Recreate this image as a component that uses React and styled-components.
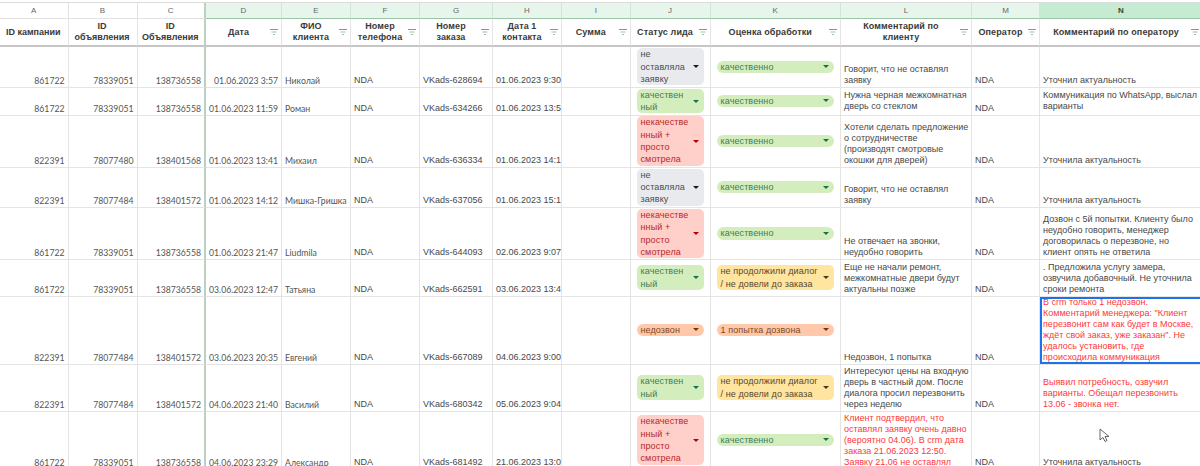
import React from 'react';
import styled, { createGlobalStyle } from 'styled-components';

const COLUMNS = '68.5px 69px 68.5px 76px 69px 69px 73px 69px 68.5px 80px 130.5px 131px 68px 163px';
const ROWS = '40.5px 28px 52px 40.5px 52px 36.5px 68px 47px 58px';

const letters = [
  { name: 'A' }, { name: 'B' }, { name: 'C' },
  { name: 'D', tone: 'active' }, { name: 'E', tone: 'active' }, { name: 'F', tone: 'active' },
  { name: 'G', tone: 'active' }, { name: 'H', tone: 'active' }, { name: 'I', tone: 'active' },
  { name: 'J', tone: 'active' }, { name: 'K', tone: 'active' }, { name: 'L', tone: 'active' },
  { name: 'M', tone: 'active' }, { name: 'N', tone: 'selected' },
];

const headers = [
  { title: 'ID кампании' },
  { title: 'ID\nобъявления' },
  { title: 'ID\nОбъявления' },
  { title: 'Дата', filter: true },
  { title: 'ФИО\nклиента', filter: true },
  { title: 'Номер\nтелефона', filter: true },
  { title: 'Номер\nзаказа', filter: true },
  { title: 'Дата 1\nконтакта', filter: true },
  { title: 'Сумма', filter: true },
  { title: 'Статус лида', filter: true },
  { title: 'Оценка обработки', filter: true },
  { title: 'Комментарий по\nклиенту', filter: true },
  { title: 'Оператор', filter: true },
  { title: 'Комментарий по оператору', filter: true },
];

const NOT_LEFT = { label: 'не\nоставляла\nзаявку', tone: 'gray' };
const GOOD_LEAD = { label: 'качествен\nный', tone: 'green' };
const BAD_LEAD = { label: 'некачестве\nнный +\nпросто\nсмотрела', tone: 'red' };
const GOOD = { label: 'качественно', tone: 'green' };
const STOPPED = { label: 'не продолжили диалог\n/ не довели до заказа', tone: 'yellow' };

const rows = [
  {
    ids: ['861722', '78339051', '138736558'], date: '01.06.2023 3:57', name: 'Николай',
    order: 'VKads-628694', contact: '01.06.2023 9:30', status: NOT_LEFT, mark: GOOD,
    client: 'Говорит, что не оставлял\nзаявку', operator: 'Уточнил актуальность',
  },
  {
    ids: ['861722', '78339051', '138736558'], date: '01.06.2023 11:59', name: 'Роман',
    order: 'VKads-634266', contact: '01.06.2023 13:59', status: GOOD_LEAD, mark: GOOD,
    client: 'Нужна черная межкомнатная\nдверь со стеклом',
    operator: 'Коммуникация по WhatsApp, выслал\nварианты', operatorTop: true, clientTop: true,
  },
  {
    ids: ['822391', '78077480', '138401568'], date: '01.06.2023 13:41', name: 'Михаил',
    order: 'VKads-636334', contact: '01.06.2023 14:15', status: BAD_LEAD, mark: GOOD,
    client: 'Хотели сделать предложение\nо сотрудничестве\n(производят смотровые\nокошки для дверей)',
    operator: 'Уточнила актуальность',
  },
  {
    ids: ['822391', '78077484', '138401572'], date: '01.06.2023 14:12', name: 'Мишка-Гришка',
    order: 'VKads-637056', contact: '01.06.2023 15:12', status: NOT_LEFT, mark: GOOD,
    client: 'Говорит, что не оставлял\nзаявку', operator: 'Уточнила актуальность',
  },
  {
    ids: ['861722', '78339051', '138736558'], date: '01.06.2023 21:47', name: 'Liudmila',
    order: 'VKads-644093', contact: '02.06.2023 9:07', status: BAD_LEAD, mark: GOOD,
    client: 'Не отвечает на звонки,\nнеудобно говорить',
    operator: 'Дозвон с 5й попытки. Клиенту было\nнеудобно говорить, менеджер\nдоговорилась о перезвоне, но\nклиент опять не ответила',
  },
  {
    ids: ['861722', '78339051', '138736558'], date: '03.06.2023 12:47', name: 'Татьяна',
    order: 'VKads-662591', contact: '03.06.2023 13:47', status: GOOD_LEAD, mark: STOPPED,
    client: 'Еще не начали ремонт,\nмежкомнатные двери будут\nактуальны позже',
    operator: '. Предложила услугу замера,\nозвучила добавочный. Не уточнила\nсроки ремонта',
  },
  {
    ids: ['822391', '78077484', '138401572'], date: '03.06.2023 20:35', name: 'Евгений',
    order: 'VKads-667089', contact: '04.06.2023 9:00',
    status: { label: 'недозвон', tone: 'orange' }, mark: { label: '1 попытка дозвона', tone: 'orange' },
    client: 'Недозвон, 1 попытка',
    operator: 'В crm только 1 недозвон.\nКомментарий менеджера: "Клиент\nперезвонит сам как будет в Москве,\nждёт свой заказ, уже заказан". Не\nудалось установить, где\nпроисходила коммуникация',
    operatorRed: true, picked: true,
  },
  {
    ids: ['822391', '78077484', '138401572'], date: '04.06.2023 21:40', name: 'Василий',
    order: 'VKads-680342', contact: '05.06.2023 9:04', status: GOOD_LEAD, mark: STOPPED,
    client: 'Интересуют цены на входную\nдверь в частный дом. После\nдиалога просил перезвонить\nчерез неделю',
    operator: 'Выявил потребность, озвучил\nварианты. Обещал перезвонить\n13.06 - звонка нет.', operatorRed: true,
  },
  {
    ids: ['861722', '78339051', '138736558'], date: '04.06.2023 23:29', name: 'Александр',
    order: 'VKads-681492', contact: '21.06.2023 13:05', status: BAD_LEAD, mark: GOOD,
    client: 'Клиент подтвердил, что\nоставлял заявку очень давно\n(вероятно 04.06). В crm дата\nзаказа 21.06.2023 12:50.\nЗаявку 21.06 не оставлял',
    clientRed: true, operator: 'Уточнила актуальность',
  },
];

const tones = {
  gray: { bg: '#e8eaed', fg: '#4a4d52', arrow: '#1b1b1b' },
  green: { bg: '#d4edbc', fg: '#3b8060', arrow: '#11734b' },
  red: { bg: '#ffcfc9', fg: '#b8282a', arrow: '#b10202' },
  orange: { bg: '#ffc8aa', fg: '#7d4a1a', arrow: '#753800' },
  yellow: { bg: '#ffe5a0', fg: '#574830', arrow: '#473821' },
};

const headTones = {
  plain: '#ffffff',
  active: '#e6f6ec',
  selected: '#c5ecd3',
};

const GlobalStyle = createGlobalStyle`
  html, body {
    margin: 0;
    height: 466px;
    overflow: hidden;
    background: #fff;
  }
`;

const Page = styled.div`
  position: relative;
  width: 1200px;
  height: 466px;
  padding-top: 2px;
  box-sizing: border-box;
  overflow: hidden;
  font-family: "Liberation Sans", Arial, sans-serif;
  font-size: 9px;
  color: #484848;
`;

const Sheet = styled.div`
  display: grid;
  grid-template-columns: ${COLUMNS};
  grid-template-rows: 16px 28px ${ROWS};
  width: max-content;
  border-top: 1px solid #dcdcdc;
`;

const Letter = styled.div`
  display: flex;
  align-items: center;
  justify-content: center;
  font-size: 8px;
  color: ${p => (p.$tone === 'selected' ? '#2d4a3a' : '#666')};
  font-weight: ${p => (p.$tone === 'selected' ? 700 : 400)};
  background: ${p => headTones[p.$tone || 'plain']};
  border-right: 1px solid ${p => (p.$tone ? '#cfe6d6' : '#e2e2e2')};
  border-bottom: 1px solid ${p => (p.$tone ? '#9cc5a8' : '#e2e2e2')};
  ${p => p.$frozen && 'border-right: 2px solid #bcd0c2;'}
  box-sizing: border-box;
`;

const HeadCell = styled.div`
  display: flex;
  align-items: center;
  padding: 0 3px 0 2px;
  box-sizing: border-box;
  border-right: 1px solid #e4e4e4;
  border-bottom: 2px solid #c6c6c6;
  ${p => p.$frozen && 'border-right: 2px solid #bcd0c2;'}
`;

const HeadTitle = styled.div`
  flex: 1;
  min-width: 0;
  text-align: center;
  font-weight: 700;
  line-height: 11px;
  letter-spacing: ${p => (p.$filtered ? '0.1px' : '0')};
  white-space: pre;
  color: #3a3a3a;
`;

const FilterMark = styled.svg`
  flex: none;
  width: 8px;
  height: 6px;
  margin-left: 1px;
`;

const Cell = styled.div`
  display: flex;
  flex-direction: column;
  justify-content: ${p => (p.$top ? 'flex-start' : 'flex-end')};
  min-width: 0;
  padding: ${p => (p.$top ? '2px 3px 0' : '0 3px 1px')};
  box-sizing: border-box;
  overflow: hidden;
  border-right: 1px solid #e4e4e4;
  border-bottom: 1px solid #e4e4e4;
  ${p => p.$frozen && 'border-right: 2px solid #bcd0c2;'}
  ${p => p.$picked && 'box-shadow: inset 0 0 0 2px #1a73e8;'}
`;

const CellText = styled.div`
  line-height: 11px;
  white-space: pre;
  text-align: ${p => p.$align || 'left'};
  color: ${p => (p.$red ? '#ff3838' : 'inherit')};
  ${p => p.$calibri && `
    font-family: Lato, "Liberation Sans", sans-serif;
    font-size: 8.7px;
    color: #555;
  `}
`;

const ChipCell = styled.div`
  display: flex;
  align-items: center;
  padding: 0 6px;
  box-sizing: border-box;
  border-right: 1px solid #e4e4e4;
  border-bottom: 1px solid #e4e4e4;
`;

const Chip = styled.div`
  flex: 1;
  display: flex;
  align-items: center;
  justify-content: space-between;
  padding: 0 4px;
  min-height: 12px;
  border-radius: ${p => (p.$multi ? '5px' : '7px')};
  background: ${p => tones[p.$tone].bg};
  color: ${p => tones[p.$tone].fg};
`;

const ChipLabel = styled.span`
  line-height: 12.3px;
  white-space: pre;
  letter-spacing: 0.1px;
`;

const ChipArrow = styled.i`
  flex: none;
  width: 0;
  height: 0;
  margin-right: 1px;
  border-left: 3px solid transparent;
  border-right: 3px solid transparent;
  border-top: 3px solid ${p => tones[p.$tone].arrow};
`;

const Pointer = styled.svg`
  position: absolute;
  left: 1099px;
  top: 428px;
  width: 11px;
  height: 15px;
`;

function Filter() {
  return (
    <FilterMark viewBox="0 0 8 6">
      <path d="M0 .5h8" stroke="#62b06a" strokeWidth="1" />
      <path d="M1.5 3h5" stroke="#9fbfa3" strokeWidth="1" />
      <path d="M3 5.5h2" stroke="#9fbfa3" strokeWidth="1" />
    </FilterMark>
  );
}

function StatusChip({ label, tone }) {
  return (
    <ChipCell>
      <Chip $tone={tone} $multi={label.includes('\n')}>
        <ChipLabel>{label}</ChipLabel>
        <ChipArrow $tone={tone} />
      </Chip>
    </ChipCell>
  );
}

function Row({ row }) {
  return (
    <>
      {row.ids.map((id, i) => (
        <Cell key={i} $frozen={i === 2}>
          <CellText $align="right" $calibri>{id}</CellText>
        </Cell>
      ))}
      <Cell><CellText $align="right" $calibri>{row.date}</CellText></Cell>
      <Cell><CellText $calibri>{row.name}</CellText></Cell>
      <Cell><CellText>NDA</CellText></Cell>
      <Cell><CellText>{row.order}</CellText></Cell>
      <Cell><CellText $align="center">{row.contact}</CellText></Cell>
      <Cell />
      <StatusChip {...row.status} />
      <StatusChip {...row.mark} />
      <Cell $top={row.clientTop}><CellText $red={row.clientRed}>{row.client}</CellText></Cell>
      <Cell><CellText>NDA</CellText></Cell>
      <Cell $top={row.operatorTop} $picked={row.picked}>
        <CellText $red={row.operatorRed}>{row.operator}</CellText>
      </Cell>
    </>
  );
}

export default function App() {
  return (
    <Page>
      <GlobalStyle />
      <Sheet>
        {letters.map((l, i) => (
          <Letter key={l.name} $tone={l.tone} $frozen={i === 2}>{l.name}</Letter>
        ))}
        {headers.map((h, i) => (
          <HeadCell key={i} $frozen={i === 2}>
            <HeadTitle $filtered={h.filter}>{h.title}</HeadTitle>
            {h.filter && <Filter />}
          </HeadCell>
        ))}
        {rows.map((row, i) => <Row key={i} row={row} />)}
      </Sheet>
      <Pointer viewBox="0 0 11 15">
        <path d="M1 1v11l3-2.5 2 4 2-1-2-4h4z" fill="#fff" stroke="#666" strokeWidth="1" />
      </Pointer>
    </Page>
  );
}
